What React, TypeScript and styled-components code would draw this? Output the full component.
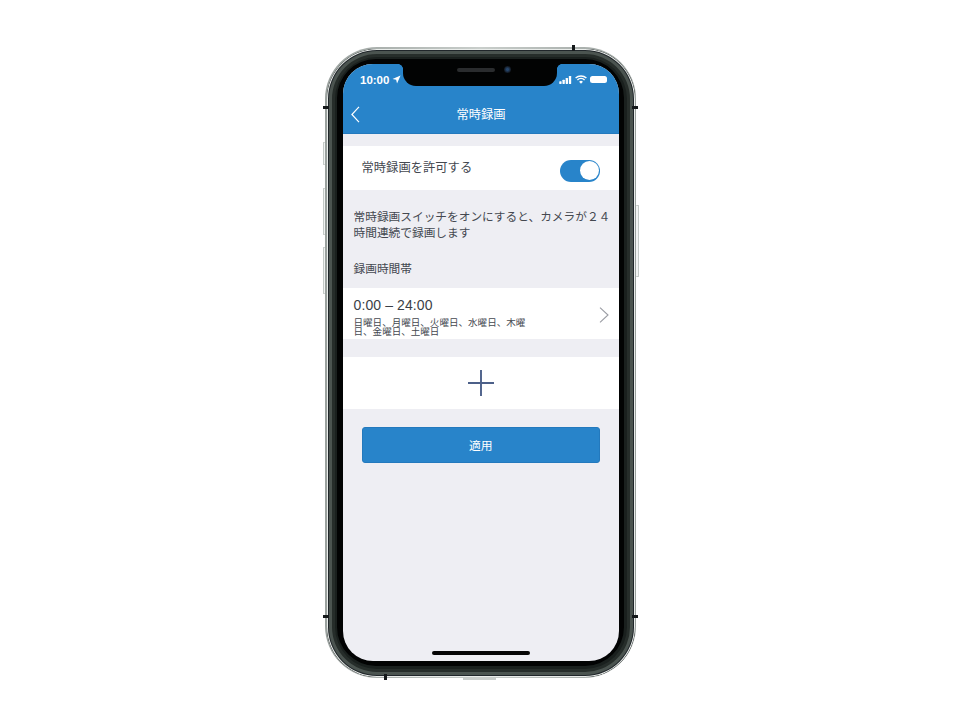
import * as React from 'react';
import styled, { createGlobalStyle } from 'styled-components';

const blue = '#2884ca';
const grey = '#eeeef3';
const textColor = '#444850';
const jpFont = `"Noto Sans CJK JP", "Noto Sans", sans-serif`;

const GlobalStyle = createGlobalStyle`
    html, body {
        margin: 0;
        padding: 0;
        background: #fff;
    }
    * {
        box-sizing: border-box;
    }
`;

export default function App() {
    return (
        <Page>
            <GlobalStyle />
            <Phone>
                <SideKey $side="left" $top={95} $height={23} />
                <SideKey $side="left" $top={141} $height={47} />
                <SideKey $side="left" $top={200} $height={47} />
                <SideKey $side="right" $top={158} $height={72} />
                <BandMark $side="left" $top={59} />
                <BandMark $side="right" $top={59} />
                <BandMark $side="left" $top={568} />
                <BandMark $side="right" $top={568} />
                <CapMark $edge="top" $left={247} />
                <CapMark $edge="bottom" $left={59} />
                <Speaker />
                <Band>
                    <Bezel>
                        <Screen>
                            <Notch>
                                <Grille />
                                <Camera />
                            </Notch>
                            <TopArea>
                                <StatusBar>
                                    <Clock>
                                        10:00
                                        <svg width="9" height="9" viewBox="0 0 10 10">
                                            <path d="M9.5.5 5.6 9.5 4.6 5.4.5 4.4Z" fill="#fff" />
                                        </svg>
                                    </Clock>
                                    <StatusIcons>
                                        <svg width="13" height="8" viewBox="0 0 14 9">
                                            <rect x="0" y="6" width="2.6" height="3" rx=".5" fill="#fff" />
                                            <rect x="3.6" y="4.2" width="2.6" height="4.8" rx=".5" fill="#fff" />
                                            <rect x="7.2" y="2.2" width="2.6" height="6.8" rx=".5" fill="#fff" />
                                            <rect x="10.8" y="0" width="2.6" height="9" rx=".5" fill="#fff" />
                                        </svg>
                                        <svg width="12" height="9" viewBox="0 0 12 9">
                                            <path d="M.6 3.1a7.8 7.8 0 0 1 10.8 0M2.4 5a5.2 5.2 0 0 1 7.2 0" fill="none" stroke="#fff" strokeWidth="1.4" />
                                            <path d="M4.1 6.7a2.7 2.7 0 0 1 3.8 0L6 8.8Z" fill="#fff" />
                                        </svg>
                                        <Battery />
                                    </StatusIcons>
                                </StatusBar>
                                <NavBar>
                                    <BackButton>
                                        <svg width="9" height="17" viewBox="0 0 9 17">
                                            <path d="M8 .8.9 8.5 8 16.2" fill="none" stroke="#fff" strokeWidth="1.2" />
                                        </svg>
                                    </BackButton>
                                    <NavTitle>常時録画</NavTitle>
                                </NavBar>
                            </TopArea>
                            <Content>
                                <SwitchRow>
                                    <SwitchLabel>常時録画を許可する</SwitchLabel>
                                    <Toggle>
                                        <Knob />
                                    </Toggle>
                                </SwitchRow>
                                <Description>
                                    常時録画スイッチをオンにすると、カメラが２４
                                    <br />
                                    時間連続で録画します
                                </Description>
                                <SectionLabel>録画時間帯</SectionLabel>
                                <ScheduleRow>
                                    <div>
                                        <TimeRange>0:00 – 24:00</TimeRange>
                                        <Days>日曜日、月曜日、火曜日、水曜日、木曜日、金曜日、土曜日</Days>
                                    </div>
                                    <svg width="10" height="16" viewBox="0 0 10 16">
                                        <path d="M1 .6 9 8 1 15.4" fill="none" stroke="#9a9ca3" strokeWidth="1.1" />
                                    </svg>
                                </ScheduleRow>
                                <AddRow>
                                    <svg width="26" height="26" viewBox="0 0 26 26">
                                        <path d="M13 0v26M0 13h26" fill="none" stroke="#4c6089" strokeWidth="1.9" />
                                    </svg>
                                </AddRow>
                                <ApplyButton>適用</ApplyButton>
                            </Content>
                            <HomeBar />
                        </Screen>
                    </Bezel>
                </Band>
            </Phone>
        </Page>
    );
}

const Page = styled.div`
    width: 960px;
    height: 720px;
    padding-top: 47px;
    display: flex;
    justify-content: center;
    align-items: flex-start;
    background: #fff;
`;

const Phone = styled.div`
    position: relative;
    width: 311px;
    height: 631px;
    margin-left: 1px;
    padding: 1.5px;
    border-radius: 52px;
    background: linear-gradient(90deg, #9aa19e, #c9cecb 50%, #9aa19e);
`;

const Band = styled.div`
    width: 100%;
    height: 100%;
    padding: 10px 10.5px 11px;
    border-radius: 50px;
    background: #1a201e;
    box-shadow: inset 0 0 0 1px #e9ecea, inset 0 0 0 2px #20262a, inset 0 0 0 5px #4b5450, inset 0 0 0 8px #262d2a;
`;

const Bezel = styled.div`
    width: 100%;
    height: 100%;
    padding: 5px 5px 5px 6px;
    border-radius: 39px;
    background: #020303;
`;

const Screen = styled.div`
    position: relative;
    height: 100%;
    overflow: hidden;
    display: flex;
    flex-direction: column;
    border-radius: 30px;
    background: ${grey};
`;

const Notch = styled.div`
    position: absolute;
    top: 0;
    left: 60px;
    width: 154px;
    height: 22px;
    display: flex;
    justify-content: center;
    align-items: center;
    gap: 9px;
    padding: 0 0 10px 8px;
    border-radius: 0 0 13px 13px;
    background: #020303;

    &::before,
    &::after {
        content: '';
        position: absolute;
        top: 0;
        width: 5px;
        height: 5px;
    }
    &::before {
        left: -5px;
        background: radial-gradient(circle at 0 100%, transparent 4.6px, #020303 5.2px);
    }
    &::after {
        right: -5px;
        background: radial-gradient(circle at 100% 100%, transparent 4.6px, #020303 5.2px);
    }
`;

const Grille = styled.div`
    width: 38px;
    height: 4px;
    border-radius: 2px;
    background: #2a2c2e;
`;

const Camera = styled.div`
    width: 7px;
    height: 7px;
    border-radius: 50%;
    background: radial-gradient(circle, #26456b 20%, #11161d 70%);
`;

const TopArea = styled.div`
    height: 70px;
    background: ${blue};
    border-bottom: 1px solid #2379bd;
`;

const StatusBar = styled.div`
    height: 32px;
    padding: 0 12px 0 17px;
    display: flex;
    justify-content: space-between;
    align-items: center;
`;

const Clock = styled.div`
    display: flex;
    align-items: center;
    gap: 3px;
    color: #fff;
    font: 700 11.5px "Liberation Sans", Arial, sans-serif;
`;

const StatusIcons = styled.div`
    display: flex;
    align-items: center;
    gap: 3px;
`;

const Battery = styled.div`
    width: 17px;
    height: 7.5px;
    border-radius: 2.5px;
    background: #fff;
`;

const NavBar = styled.div`
    position: relative;
    height: 37px;
    display: flex;
    justify-content: center;
    align-items: center;
    padding-bottom: 1px;
`;

const BackButton = styled.div`
    position: absolute;
    left: 7.5px;
    top: 10px;
    display: flex;
`;

const NavTitle = styled.div`
    color: #fff;
    font: 400 12.3px ${jpFont};
`;

const Content = styled.div`
    flex: 1;
    padding-top: 12px;
    display: flex;
    flex-direction: column;
`;

const SwitchRow = styled.div`
    height: 44px;
    padding: 6px 19px 0 18.5px;
    display: flex;
    justify-content: space-between;
    align-items: center;
    background: #fff;
`;

const SwitchLabel = styled.div`
    margin-bottom: 8px;
    color: ${textColor};
    font: 400 12.3px ${jpFont};
`;

const Toggle = styled.div`
    width: 40px;
    height: 22px;
    padding: 1.5px;
    display: flex;
    justify-content: flex-end;
    border-radius: 11px;
    background: ${blue};
`;

const Knob = styled.div`
    width: 19px;
    height: 19px;
    border-radius: 50%;
    background: #fff;
`;

const Description = styled.div`
    padding: 18px 0 0 10.5px;
    white-space: nowrap;
    color: ${textColor};
    font: 400 11.7px/16.5px ${jpFont};
`;

const SectionLabel = styled.div`
    padding: 19px 0 0 10.5px;
    height: 47px;
    color: ${textColor};
    font: 400 11.7px/16.5px ${jpFont};
`;

const ScheduleRow = styled.div`
    height: 51px;
    padding: 8px 10.5px 0 10.5px;
    display: flex;
    justify-content: space-between;
    align-items: flex-start;
    background: #fff;
    overflow: hidden;

    svg {
        flex-shrink: 0;
        margin-top: 11px;
    }
`;

const TimeRange = styled.div`
    color: #3b3f47;
    letter-spacing: 0.1px;
    font: 400 14px/18px "Liberation Sans", Arial, sans-serif;
`;

const Days = styled.div`
    width: 173px;
    margin-top: 4px;
    color: ${textColor};
    font: 400 9.55px/9.5px ${jpFont};
`;

const AddRow = styled.div`
    height: 52px;
    margin-top: 18px;
    display: flex;
    justify-content: center;
    align-items: center;
    background: #fff;
`;

const ApplyButton = styled.div`
    height: 36px;
    margin: 18px 19px 0 18.5px;
    display: flex;
    justify-content: center;
    align-items: center;
    border: 1px solid #2379bd;
    border-radius: 3px;
    background: ${blue};
    color: #fff;
    font: 400 11.8px ${jpFont};
`;

const HomeBar = styled.div`
    position: absolute;
    left: 89px;
    bottom: 6px;
    width: 98px;
    height: 3.5px;
    border-radius: 2px;
    background: #050505;
`;

type SideProps = { $side: 'left' | 'right'; $top: number };

const SideKey = styled.div<SideProps & { $height: number }>`
    position: absolute;
    top: ${p => p.$top}px;
    ${p => p.$side}: -2.5px;
    width: 2.5px;
    height: ${p => p.$height}px;
    border: 1px solid #c3c9c6;
    border-${p => (p.$side === 'left' ? 'right' : 'left')}: none;
    border-radius: 1px;
    background: #f2f4f3;
`;

const BandMark = styled.div<SideProps>`
    position: absolute;
    z-index: 1;
    top: ${p => p.$top}px;
    ${p => p.$side}: -2px;
    width: 6px;
    height: 3px;
    background: #14181a;
`;

const CapMark = styled.div<{ $edge: 'top' | 'bottom'; $left: number }>`
    position: absolute;
    z-index: 1;
    left: ${p => p.$left}px;
    ${p => p.$edge}: -2px;
    width: 3px;
    height: 6px;
    background: #14181a;
`;

const Speaker = styled.div`
    position: absolute;
    left: 138px;
    bottom: -1.5px;
    width: 33px;
    height: 1.5px;
    background: #c9cdcb;
`;
